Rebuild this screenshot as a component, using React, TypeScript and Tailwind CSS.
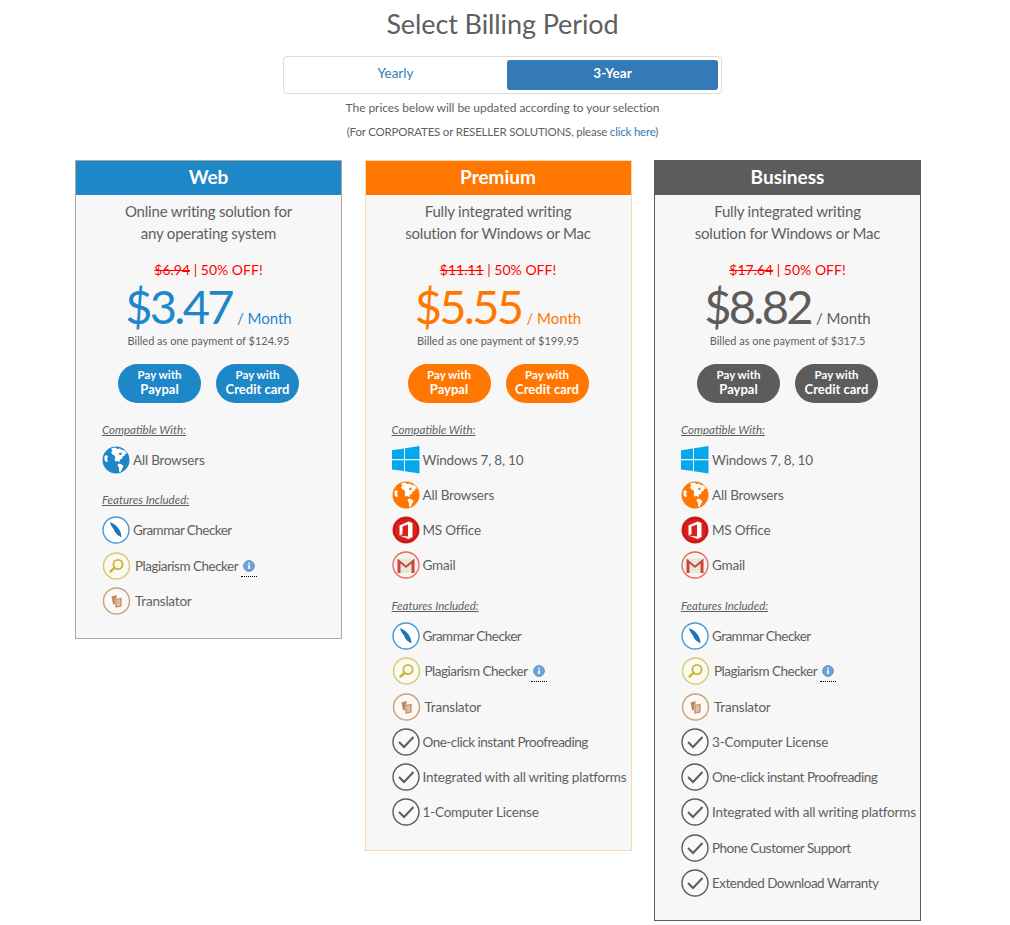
import React from 'react';

type Plan = {
  name: string;
  blurb: [string, string];
  was: string;
  price: string;
  billed: string;
  head: string;
  text: string;
  btn: string;
  border: string;
  globe: string;
  compat: string[];
  extras: string[];
};

const Globe = ({ color }: { color: string }) => (
  <svg width="28" height="28" viewBox="0 0 28 28">
    <circle cx="14" cy="14" r="13.5" fill={color} />
    <path d="M9 2.5 L13 1.5 L15.5 3 L18 2.5 L20 4 L23 4.5 L25 7.5 L23 8 L22.5 10 L20.5 10.5 L20 13 L18 13.5 L17.5 16 L15.5 15 L13.5 15.5 L12.5 13 L13.5 11.5 L12 9 L10.5 8.5 L9 6 L10.5 5 Z" fill="#fff" />
    <path d="M17 7 L19.5 6.5 L19.5 9 L17.5 9 Z" fill={color} />
    <path d="M16.5 17.5 L19 18 L21.5 20 L20 23 L18.5 26 L17 25.5 L17 22 L15.5 19.5 Z" fill="#fff" />
    <path d="M2.5 10 L4.5 9 L6 11 L5 13 L6 15.5 L4 16 L2.5 14 Z" fill="#fff" />
  </svg>
);

const WindowsLogo = () => (
  <svg width="28" height="28" viewBox="0 0 28 28">
    <path d="M0 4.2 L12 2.4 V13 H0 Z M13 2.2 L27.5 0 V13 H13 Z M0 14.2 H12 V25 L0 23.4 Z M13 14.2 H27.5 V27.5 L13 25.2 Z" fill="#04a9ec" />
  </svg>
);

const Office = () => (
  <svg width="28" height="28" viewBox="0 0 28 28">
    <circle cx="14" cy="14" r="13.5" fill="#dd1f1c" />
    <circle cx="14" cy="14" r="12" fill="none" stroke="#a91512" strokeWidth="1" />
    <path d="M7.5 9.5 L16.5 5.5 L20.5 7 V21 L16.5 23 L7.5 19.5 L16 20.5 V8.5 L10.5 10.5 V18 L7.5 19.5 Z" fill="#fff" />
  </svg>
);

const Gmail = () => (
  <svg width="28" height="28" viewBox="0 0 28 28">
    <circle cx="14" cy="14" r="13" fill="#f9f3f2" stroke="#e8665c" strokeWidth="1.3" />
    <path d="M5.5 7.5 H22.5 V22 H5.5 Z" fill="#e9e7da" />
    <path d="M5.5 7.5 L14 14.5 L22.5 7.5 V22 H19.5 V12.5 L14 17 L8.5 12.5 V22 H5.5 Z" fill="#c9483c" />
  </svg>
);

const Quill = () => (
  <svg width="28" height="28" viewBox="0 0 28 28">
    <circle cx="14" cy="14" r="13" fill="#fff" stroke="#4a9ad0" strokeWidth="1.4" />
    <path d="M8 6 C13 8 19.5 13 19.5 21.5 L18 20.5 C14.5 18.5 12.5 16 12 13.5 C10.5 11.5 8.5 9 8 6 Z" fill="#1b74b8" />
  </svg>
);

const Lens = () => (
  <svg width="29" height="28" viewBox="0 0 29 28">
    <circle cx="14.5" cy="14" r="13" fill="#fbfaf2" stroke="#d8ca6e" strokeWidth="1.4" />
    <circle cx="16" cy="12.5" r="4.6" fill="none" stroke="#cdb23a" strokeWidth="1.8" />
    <path d="M12.6 15.9 L8.5 19.5" stroke="#cdb23a" strokeWidth="2.4" strokeLinecap="round" />
  </svg>
);

const Docs = () => (
  <svg width="29" height="28" viewBox="0 0 29 28">
    <circle cx="14.5" cy="14" r="13" fill="#fbf8f5" stroke="#c8a27e" strokeWidth="1.4" />
    <path d="M9.5 9.5 L14.5 8 V11.5 L13 12 V17.5 L11 17 Z" fill="#bd8a5b" />
    <path d="M14 12.5 L19 11.5 V19 L14 20 Z" fill="#e0c2a3" stroke="#bd8a5b" strokeWidth="1.2" />
  </svg>
);

const Check = () => (
  <svg width="28" height="28" viewBox="0 0 28 28">
    <circle cx="14" cy="14" r="13" fill="#f9f9f9" stroke="#5c5c5c" strokeWidth="1.4" />
    <path d="M7 14 L12 19 L21.5 9" fill="none" stroke="#5c5c5c" strokeWidth="2" />
  </svg>
);

const Info = () => (
  <svg width="12" height="12" viewBox="0 0 12 12" className="block">
    <circle cx="6" cy="6" r="5.4" fill="#6ea3d8" stroke="#4a85bd" strokeWidth="0.8" />
    <circle cx="6" cy="3.3" r="0.9" fill="#fff" />
    <rect x="5.2" y="5" width="1.6" height="4" fill="#fff" />
  </svg>
);

const plans: Plan[] = [
  {
    name: 'Web',
    blurb: ['Online writing solution for', 'any operating system'],
    was: '$6.94',
    price: '$3.47',
    billed: '$124.95',
    head: 'bg-[#1e87c8]',
    text: 'text-[#1e87c8]',
    btn: 'bg-[#1e87c8]',
    border: 'border-[#a9a9a9]',
    globe: '#1e87c8',
    compat: ['All Browsers'],
    extras: [],
  },
  {
    name: 'Premium',
    blurb: ['Fully integrated writing', 'solution for Windows or Mac'],
    was: '$11.11',
    price: '$5.55',
    billed: '$199.95',
    head: 'bg-[#ff7700]',
    text: 'text-[#ff7700]',
    btn: 'bg-[#ff7700]',
    border: 'border-[#fbd9ae]',
    globe: '#ff7700',
    compat: ['Windows 7, 8, 10', 'All Browsers', 'MS Office', 'Gmail'],
    extras: ['One-click instant Proofreading', 'Integrated with all writing platforms', '1-Computer License'],
  },
  {
    name: 'Business',
    blurb: ['Fully integrated writing', 'solution for Windows or Mac'],
    was: '$17.64',
    price: '$8.82',
    billed: '$317.5',
    head: 'bg-[#5c5c5c]',
    text: 'text-[#5c5c5c]',
    btn: 'bg-[#5c5c5c]',
    border: 'border-[#5c5c5c]',
    globe: '#ff7700',
    compat: ['Windows 7, 8, 10', 'All Browsers', 'MS Office', 'Gmail'],
    extras: [
      '3-Computer License',
      'One-click instant Proofreading',
      'Integrated with all writing platforms',
      'Phone Customer Support',
      'Extended Download Warranty',
    ],
  },
];

// these labels run long in Lato compared with the reference
const tight = new Set(['Phone Customer Support', 'Extended Download Warranty', 'One-click instant Proofreading']);

function Row({ icon, wide, children }: { icon: React.ReactNode; wide?: boolean; children: React.ReactNode }) {
  return (
    <div className="flex h-[35.25px] items-center text-[13.5px] tracking-[-0.2px] whitespace-nowrap">
      <span className={wide ? 'flex w-[33px] shrink-0' : 'flex w-[31px] shrink-0'}>{icon}</span>
      {children}
    </div>
  );
}

function compatIcon(label: string, globe: string) {
  if (label.startsWith('Windows')) return <WindowsLogo />;
  if (label === 'MS Office') return <Office />;
  if (label === 'Gmail') return <Gmail />;
  return <Globe color={globe} />;
}

function Card({ plan }: { plan: Plan }) {
  return (
    <div className={`w-[267px] shrink-0 border ${plan.border} bg-[#f7f7f7] pb-[19.5px]`}>
      <div className={`${plan.head} flex h-[34px] items-center justify-center pb-[1px] text-[19px] font-bold text-white`}>
        {plan.name}
      </div>
      <div className="mt-[5px] text-center text-[15px] leading-[22px] tracking-[-0.2px]">
        <p>{plan.blurb[0]}</p>
        <p>{plan.blurb[1]}</p>
      </div>
      <p className="mt-[15px] text-center text-[14px] leading-[22px] text-[#ff0000]">
        <s>{plan.was}</s> | 50% OFF!
      </p>
      <div className={`mt-[1px] flex h-[50px] items-baseline justify-center gap-[5px] ${plan.text}`}>
        <span className="text-[47px] leading-[48px] tracking-[-2.7px]">{plan.price}</span>
        <span className="text-[15px] leading-[20px]">/ Month</span>
      </div>
      <p className="mt-[1px] text-center text-[11px] leading-[16px]">Billed as one payment of {plan.billed}</p>
      <div className="mt-[15px] flex justify-center gap-[15px]">
        <button className={`${plan.btn} h-[39px] w-[83px] rounded-[20px] pb-[3px] text-white`}>
          <span className="block text-[11.5px] leading-[14px] font-bold">Pay with</span>
          <span className="block text-[13px] leading-[15px] font-bold">Paypal</span>
        </button>
        <button className={`${plan.btn} h-[39px] w-[83px] rounded-[20px] pb-[3px] text-white`}>
          <span className="block text-[11.5px] leading-[14px] font-bold">Pay with</span>
          <span className="block text-[13px] leading-[15px] font-bold">Credit card</span>
        </button>
      </div>
      <div className="mt-[19px] pl-[26px]">
        <p className="text-[11.5px] leading-[16px] italic underline">Compatible With:</p>
        <div className="mt-[4px]">
          {plan.compat.map((c) => (
            <Row key={c} icon={compatIcon(c, plan.globe)}>
              <span>{c}</span>
            </Row>
          ))}
        </div>
        <p className="mt-[15px] text-[11.5px] leading-[16px] italic underline">Features Included:</p>
        <div className="mt-[4.5px]">
          <Row icon={<Quill />}>
            <span className="tracking-[-0.55px]">Grammar Checker</span>
          </Row>
          <Row wide icon={<Lens />}>
            <span className="tracking-[-0.5px]">Plagiarism Checker</span>
            <span className="ml-[3px] border-b border-dotted border-black px-[2px] pt-[5px] pb-[4px]">
              <Info />
            </span>
          </Row>
          <Row wide icon={<Docs />}>
            <span>Translator</span>
          </Row>
          {plan.extras.map((e) => (
            <Row key={e} icon={<Check />}>
              <span className={tight.has(e) ? 'tracking-[-0.5px]' : ''}>{e}</span>
            </Row>
          ))}
        </div>
      </div>
    </div>
  );
}

export default function App() {
  return (
    <div className="min-h-[925px] bg-white pt-[8px] font-['Lato',sans-serif] text-[#5f5f5f]">
      <div className="pr-[5px] text-center">
        <h1 className="text-[27px] leading-[32px] tracking-[-0.1px]">Select Billing Period</h1>
        <div className="mx-auto mt-[16px] flex h-[38px] w-[439px] gap-[3px] rounded-[4px] border border-[#dddddd] p-[3px]">
          <div className="flex flex-1 items-center justify-center pb-[4px] text-[13.5px] text-[#337ab7]">Yearly</div>
          <div className="flex w-[211px] items-center justify-center rounded-[3px] bg-[#337ab7] pb-[4px] text-[13.5px] font-bold text-white">
            3-Year
          </div>
        </div>
        <p className="mt-[6px] text-[12px] leading-[16px] tracking-[-0.05px]">The prices below will be updated according to your selection</p>
        <p className="mt-[8px] text-[11.5px] leading-[16px] tracking-[-0.2px]">
          (For CORPORATES or RESELLER SOLUTIONS, please <span className="text-[#337ab7]">click here</span>)
        </p>
      </div>
      <div className="mt-[20px] flex items-start gap-[22.5px] pl-[75px]">
        {plans.map((p) => (
          <Card key={p.name} plan={p} />
        ))}
      </div>
    </div>
  );
}
